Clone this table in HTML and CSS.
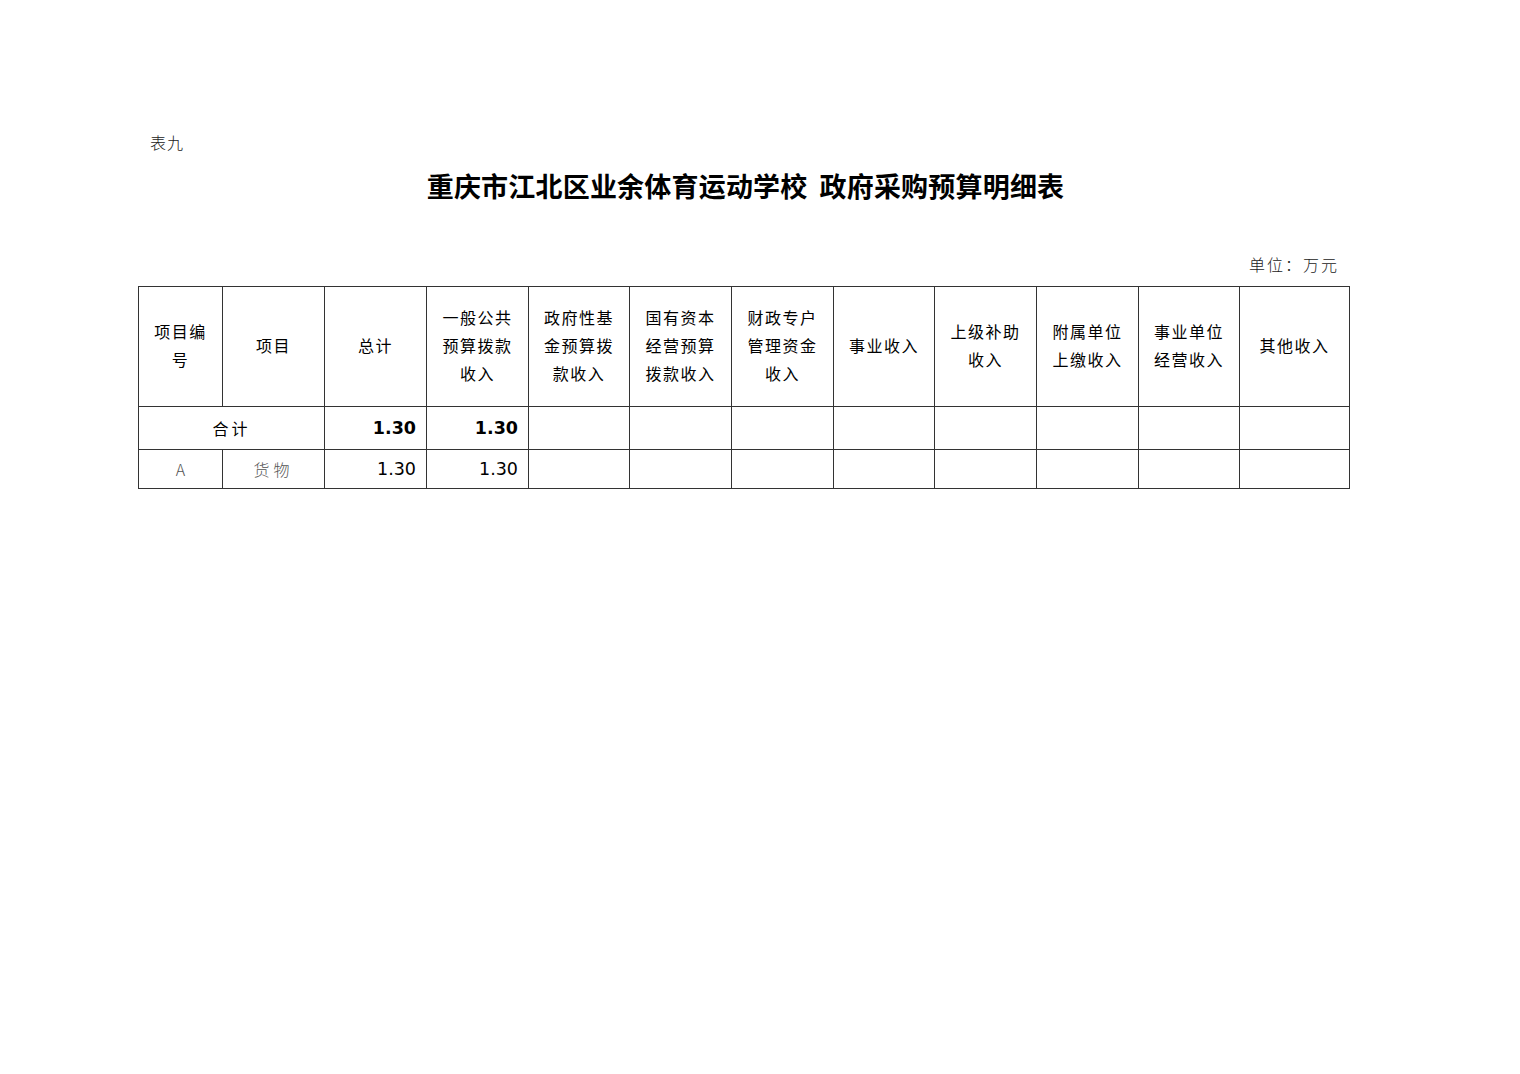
FILE: index.html
```html
<!DOCTYPE html>
<html lang="zh-CN">
<head>
<meta charset="utf-8">
<title>政府采购预算明细表</title>
<link rel="stylesheet" href="styles.css">
</head>
<body>
<div class="page">
  <div class="tag">表九</div>
  <h1 class="title">重庆市江北区业余体育运动学校<span class="gap"></span>政府采购预算明细表</h1>
  <div class="unit">单位：万元</div>
  <table class="grid">
    <colgroup>
      <col class="c84"><col class="c102"><col class="c102"><col class="c102"><col class="c101"><col class="c102"><col class="c102"><col class="c101"><col class="c102"><col class="c102"><col class="c101"><col class="c110">
    </colgroup>
    <tr class="head">
      <th>项目编<br>号</th>
      <th>项目</th>
      <th>总计</th>
      <th>一般公共<br>预算拨款<br>收入</th>
      <th>政府性基<br>金预算拨<br>款收入</th>
      <th>国有资本<br>经营预算<br>拨款收入</th>
      <th>财政专户<br>管理资金<br>收入</th>
      <th>事业收入</th>
      <th>上级补助<br>收入</th>
      <th>附属单位<br>上缴收入</th>
      <th>事业单位<br>经营收入</th>
      <th>其他收入</th>
    </tr>
    <tr class="sum">
      <td colspan="2" class="label">合计</td>
      <td class="num bold">1.30</td>
      <td class="num bold">1.30</td>
      <td></td><td></td><td></td><td></td><td></td><td></td><td></td><td></td>
    </tr>
    <tr class="item">
      <td class="light">A</td>
      <td class="light spaced">货物</td>
      <td class="num">1.30</td>
      <td class="num">1.30</td>
      <td></td><td></td><td></td><td></td><td></td><td></td><td></td><td></td>
    </tr>
  </table>
</div>
</body>
</html>
```

FILE: styles.css
```css
html, body {
  margin: 0;
  padding: 0;
  background: #ffffff;
}
body {
  font-family: "Noto Sans CJK SC", "Noto Sans", sans-serif;
  color: #000;
}
.page {
  width: 1211px;
  margin-left: 138px;
  padding-top: 132px;
}
.tag {
  margin-left: 12px;
  font-size: 16px;
  line-height: 20px;
  letter-spacing: 1px;
  color: #222;
  font-weight: 300;
}
.title {
  margin: 14px 0 0 0;
  text-align: center;
  font-size: 27px;
  line-height: 40px;
  font-weight: 700;
  letter-spacing: 0.2px;
  padding-left: 4px;
}
.gap {
  display: inline-block;
  width: 12px;
}
.unit {
  margin-top: 47px;
  text-align: right;
  padding-right: 10px;
  font-size: 16px;
  line-height: 22px;
  letter-spacing: 2px;
  font-weight: 300;
  color: #222;
}
.grid {
  margin-top: 11px;
  border-collapse: collapse;
  table-layout: fixed;
  width: 1212px;
}
.c84 { width: 84px; }
.c101 { width: 101px; }
.c102 { width: 102px; }
.c110 { width: 110px; }
.grid th, .grid td {
  border: 1px solid #333;
  padding: 0;
  text-align: center;
  vertical-align: middle;
}
.head th {
  height: 115px;
  padding-bottom: 4px;
  font-size: 16px;
  line-height: 28px;
  font-weight: 400;
  letter-spacing: 1.5px;
}
.sum td {
  height: 42px;
  font-size: 16px;
}
.item td {
  height: 38px;
  font-size: 16px;
}
.label {
  letter-spacing: 3px;
  font-weight: 400;
}
.num {
  text-align: right !important;
  padding-right: 10px !important;
  font-family: "DejaVu Sans", sans-serif;
  font-size: 17.5px !important;
}
.bold {
  font-weight: 700;
}
.light {
  font-weight: 300;
  color: #555;
}
.spaced {
  letter-spacing: 4px;
}
```
